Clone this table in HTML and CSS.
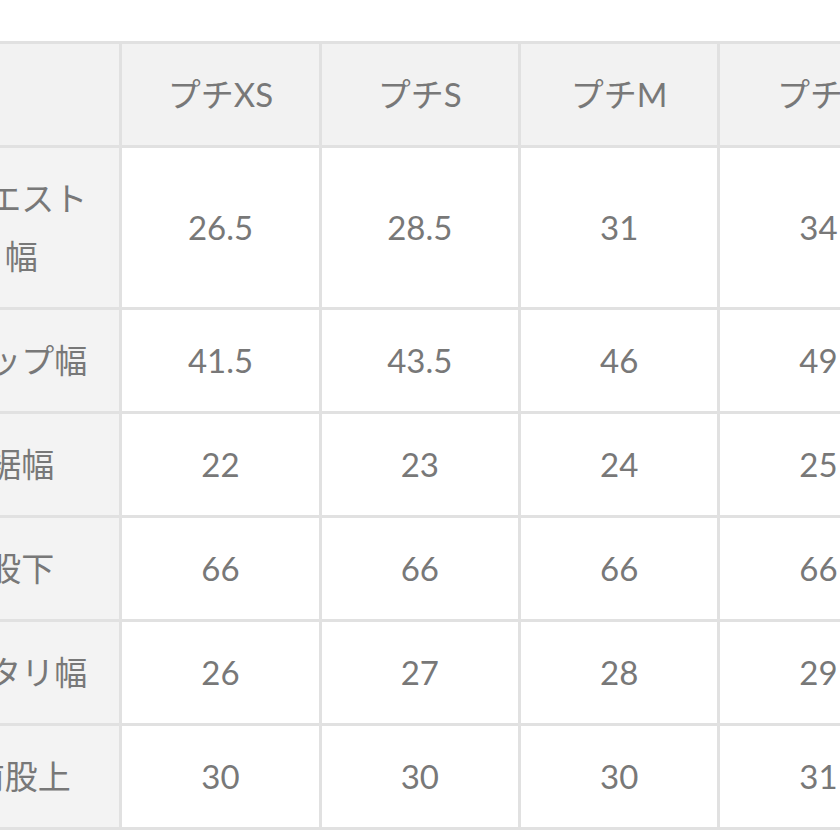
FILE: index.html
```html
<!DOCTYPE html>
<html lang="ja">
<head>
<meta charset="utf-8">
<title>サイズ表</title>
<link rel="stylesheet" href="styles.css">
</head>
<body>
<div class="viewport">
  <table class="size-table">
    <colgroup>
      <col class="col"><col class="col"><col class="col"><col class="col"><col class="col"><col class="col">
    </colgroup>
    <thead>
      <tr>
        <th class="corner"></th>
        <th class="head">プチXS</th>
        <th class="head">プチS</th>
        <th class="head">プチM</th>
        <th class="head">プチL</th>
        <th class="head">プチLL</th>
      </tr>
    </thead>
    <tbody>
      <tr>
        <th class="label">ウエスト幅</th>
        <td>26.5</td><td>28.5</td><td>31</td><td>34</td><td>37</td>
      </tr>
      <tr>
        <th class="label">ヒップ幅</th>
        <td>41.5</td><td>43.5</td><td>46</td><td>49</td><td>52</td>
      </tr>
      <tr>
        <th class="label">裾幅</th>
        <td>22</td><td>23</td><td>24</td><td>25</td><td>26</td>
      </tr>
      <tr>
        <th class="label">股下</th>
        <td>66</td><td>66</td><td>66</td><td>66</td><td>66</td>
      </tr>
      <tr>
        <th class="label">ワタリ幅</th>
        <td>26</td><td>27</td><td>28</td><td>29</td><td>30</td>
      </tr>
      <tr>
        <th class="label">前股上</th>
        <td>30</td><td>30</td><td>30</td><td>31</td><td>31</td>
      </tr>
    </tbody>
  </table>
</div>
</body>
</html>
```

FILE: styles.css
```css
html, body {
  margin: 0;
  padding: 0;
  background: #ffffff;
}

.viewport {
  width: 840px;
  height: 840px;
  overflow: hidden;
  padding-top: 41px;
  box-sizing: border-box;
}

.size-table {
  margin-left: -80px;
  border-collapse: collapse;
  table-layout: fixed;
  width: 1196px;
  font-family: "Lato", "Noto Sans CJK JP", sans-serif;
  font-size: 33px;
  color: #787878;
}

.col {
  width: 199.33px;
}

.size-table th,
.size-table td {
  border: 3px solid #e1e1e1;
  padding: 21px 24px 22px;
  line-height: 58px;
  text-align: center;
  font-weight: 400;
  vertical-align: middle;
}

.size-table thead th {
  background: #f2f2f2;
}

.size-table .label {
  background: #f3f3f3;
}

.size-table td {
  background: #ffffff;
}
```
